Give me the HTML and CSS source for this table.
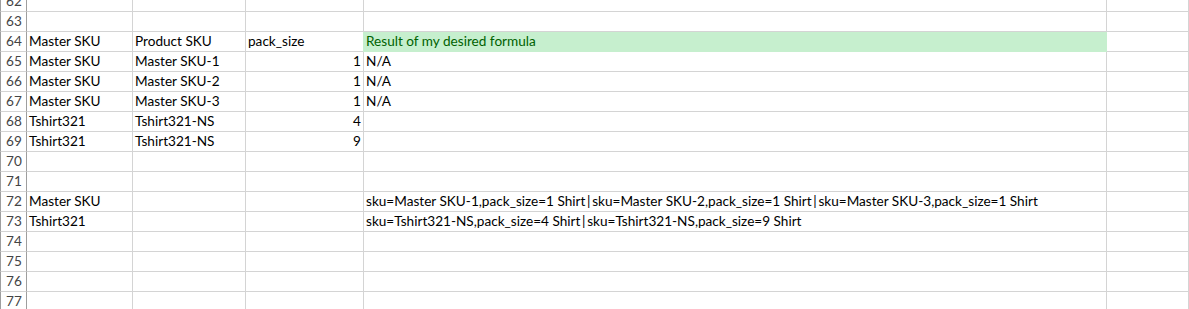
FILE: index.html
```html
<!DOCTYPE html>
<html>
<head>
<meta charset="utf-8">
<link rel="stylesheet" href="styles.css">
</head>
<body>
<div class="sheet">
  <div class="row first"><div class="hd">62</div><div class="c"></div><div class="c"></div><div class="c"></div><div class="c"></div><div class="c"></div></div>
  <div class="row"><div class="hd">63</div><div class="c"></div><div class="c"></div><div class="c"></div><div class="c"></div><div class="c"></div></div>
  <div class="row"><div class="hd">64</div><div class="c">Master SKU</div><div class="c">Product SKU</div><div class="c">pack_size</div><div class="c good">Result of my desired formula</div><div class="c"></div></div>
  <div class="row"><div class="hd">65</div><div class="c">Master SKU</div><div class="c">Master SKU-1</div><div class="c num">1</div><div class="c">N/A</div><div class="c"></div></div>
  <div class="row"><div class="hd">66</div><div class="c">Master SKU</div><div class="c">Master SKU-2</div><div class="c num">1</div><div class="c">N/A</div><div class="c"></div></div>
  <div class="row"><div class="hd">67</div><div class="c">Master SKU</div><div class="c">Master SKU-3</div><div class="c num">1</div><div class="c">N/A</div><div class="c"></div></div>
  <div class="row"><div class="hd">68</div><div class="c">Tshirt321</div><div class="c">Tshirt321-NS</div><div class="c num">4</div><div class="c"></div><div class="c"></div></div>
  <div class="row"><div class="hd">69</div><div class="c">Tshirt321</div><div class="c">Tshirt321-NS</div><div class="c num">9</div><div class="c"></div><div class="c"></div></div>
  <div class="row"><div class="hd">70</div><div class="c"></div><div class="c"></div><div class="c"></div><div class="c"></div><div class="c"></div></div>
  <div class="row"><div class="hd">71</div><div class="c"></div><div class="c"></div><div class="c"></div><div class="c"></div><div class="c"></div></div>
  <div class="row"><div class="hd">72</div><div class="c">Master SKU</div><div class="c"></div><div class="c"></div><div class="c">sku=Master SKU-1,pack_size=1 Shirt<span class="pipe">|</span>sku=Master SKU-2,pack_size=1 Shirt<span class="pipe">|</span>sku=Master SKU-3,pack_size=1 Shirt</div><div class="c"></div></div>
  <div class="row"><div class="hd">73</div><div class="c">Tshirt321</div><div class="c"></div><div class="c"></div><div class="c">sku=Tshirt321-NS,pack_size=4 Shirt<span class="pipe">|</span>sku=Tshirt321-NS,pack_size=9 Shirt</div><div class="c"></div></div>
  <div class="row"><div class="hd">74</div><div class="c"></div><div class="c"></div><div class="c"></div><div class="c"></div><div class="c"></div></div>
  <div class="row"><div class="hd">75</div><div class="c"></div><div class="c"></div><div class="c"></div><div class="c"></div><div class="c"></div></div>
  <div class="row"><div class="hd">76</div><div class="c"></div><div class="c"></div><div class="c"></div><div class="c"></div><div class="c"></div></div>
  <div class="row last"><div class="hd">77</div><div class="c"></div><div class="c"></div><div class="c"></div><div class="c"></div><div class="c"></div></div>
</div>
</body>
</html>
```

FILE: styles.css
```css
html, body {
  margin: 0;
  padding: 0;
  background: #ffffff;
}
.sheet {
  width: 1189px;
  height: 309px;
  overflow: hidden;
  font-family: Lato, "Liberation Sans", sans-serif;
  font-size: 13.6px;
  color: #000000;
}
.row {
  display: grid;
  grid-template-columns: 27px 106px 113px 118px 743px 1fr;
  height: 20px;
}
.row.first {
  height: 12px;
}
.hd, .c {
  display: flex;
  align-items: flex-end;
  border-bottom: 1px solid #d4d4d4;
  border-right: 1px solid #d4d4d4;
  line-height: 17px;
  padding-bottom: 1px;
  white-space: nowrap;
  min-width: 0;
}
.hd {
  justify-content: center;
  border-left: 1px solid #9e9e9e;
  border-right: 1px solid #9e9e9e;
  color: #444444;
  padding-left: 1px;
  overflow: hidden;
}
.c {
  padding-left: 2px;
}
.row.first .c {
  overflow: hidden;
}
.num {
  justify-content: flex-end;
  padding-right: 2px;
}
.pipe {
  margin: 0 1.7px;
}
.good {
  background: #c6efce;
  color: #006100;
  border-right-color: #c6efce;
  border-bottom-color: #c6efce;
  margin-left: -1px;
  padding-left: 3px;
}
```
